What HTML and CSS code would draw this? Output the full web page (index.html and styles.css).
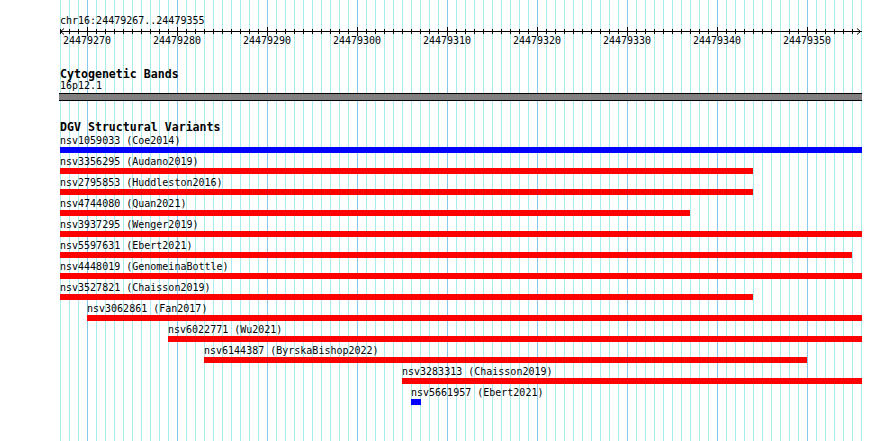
FILE: index.html
```html
<!DOCTYPE html>
<html>
<head>
<meta charset="utf-8">
<link rel="stylesheet" href="styles.css">
</head>
<body>
<div class="panel">
  <div class="locus">chr16:24479267..24479355</div>
  <svg class="ruler" width="802" height="21" viewBox="0 0 802 21">
    <g class="ticks" stroke="#000" stroke-width="1" shape-rendering="crispEdges">
      <line x1="0" y1="4.5" x2="802" y2="4.5"/>
      <path id="minor" d="M0.5 2V7M9.5 2V7M18.5 2V7M36.5 2V7M45.5 2V7M54.5 2V7M63.5 2V7M72.5 2V7M81.5 2V7M99.5 2V7M108.5 2V7"/>
      <use href="#minor" x="90"/><use href="#minor" x="180"/><use href="#minor" x="270"/>
      <use href="#minor" x="360"/><use href="#minor" x="450"/><use href="#minor" x="540"/>
      <use href="#minor" x="630"/>
      <path d="M747.5 2V7M756.5 2V7M765.5 2V7M774.5 2V7M783.5 2V7M792.5 2V7"/>
      <path d="M27.5 0V9M117.5 0V9M207.5 0V9M297.5 0V9M387.5 0V9M477.5 0V9M567.5 0V9M657.5 0V9M747.5 0V9"/>
    </g>
    <g stroke="#000" stroke-width="1" fill="none">
      <path d="M4 1.5L0.5 4.5L4 7.5"/>
      <path d="M797 1.5L800.5 4.5L797 7.5"/>
    </g>
    <g class="labels" text-anchor="middle">
      <text x="27" y="17">24479270</text>
      <text x="117" y="17">24479280</text>
      <text x="207" y="17">24479290</text>
      <text x="297" y="17">24479300</text>
      <text x="387" y="17">24479310</text>
      <text x="477" y="17">24479320</text>
      <text x="567" y="17">24479330</text>
      <text x="657" y="17">24479340</text>
      <text x="747" y="17">24479350</text>
    </g>
  </svg>

  <section class="track cyto">
    <h2 class="track-title">Cytogenetic Bands</h2>
    <div class="label">16p12.1</div>
    <div class="band"></div>
  </section>

  <section class="track dgv">
    <h2 class="track-title">DGV Structural Variants</h2>
    <div class="feature" style="padding-left:0px"><div class="label">nsv1059033 (Coe2014)</div><div class="bar blue" style="width:802px"></div></div>
    <div class="feature" style="padding-left:0px"><div class="label">nsv3356295 (Audano2019)</div><div class="bar red" style="width:693px"></div></div>
    <div class="feature" style="padding-left:0px"><div class="label">nsv2795853 (Huddleston2016)</div><div class="bar red" style="width:693px"></div></div>
    <div class="feature" style="padding-left:0px"><div class="label">nsv4744080 (Quan2021)</div><div class="bar red" style="width:630px"></div></div>
    <div class="feature" style="padding-left:0px"><div class="label">nsv3937295 (Wenger2019)</div><div class="bar red" style="width:802px"></div></div>
    <div class="feature" style="padding-left:0px"><div class="label">nsv5597631 (Ebert2021)</div><div class="bar red" style="width:792px"></div></div>
    <div class="feature" style="padding-left:0px"><div class="label">nsv4448019 (GenomeinaBottle)</div><div class="bar red" style="width:802px"></div></div>
    <div class="feature" style="padding-left:0px"><div class="label">nsv3527821 (Chaisson2019)</div><div class="bar red" style="width:693px"></div></div>
    <div class="feature" style="padding-left:27px"><div class="label">nsv3062861 (Fan2017)</div><div class="bar red" style="width:775px"></div></div>
    <div class="feature" style="padding-left:108px"><div class="label">nsv6022771 (Wu2021)</div><div class="bar red" style="width:694px"></div></div>
    <div class="feature" style="padding-left:144px"><div class="label">nsv6144387 (ByrskaBishop2022)</div><div class="bar red" style="width:603px"></div></div>
    <div class="feature" style="padding-left:342px"><div class="label">nsv3283313 (Chaisson2019)</div><div class="bar red" style="width:460px"></div></div>
    <div class="feature" style="padding-left:351px"><div class="label">nsv5661957 (Ebert2021)</div><div class="bar blue" style="width:10px"></div></div>
  </section>
</div>
</body>
</html>
```

FILE: styles.css
```css
html, body {
  margin: 0;
  padding: 0;
  background: #ffffff;
  overflow: hidden;
}

body {
  font-family: "DejaVu Sans Mono", "Liberation Mono", monospace;
  font-size: 10px;
  color: #000000;
}

.panel {
  box-sizing: border-box;
  margin-left: 60px;
  width: 802px;
  height: 441px;
  padding-top: 15px;
  background-color: #ffffff;
  background-image:
    repeating-linear-gradient(to right, transparent 0 27px, #87c6ee 27px 28px, transparent 28px 90px),
    repeating-linear-gradient(to right, #a8ecf0 0 1px, transparent 1px 9px);
}

.locus {
  line-height: 12px;
  height: 12px;
  white-space: nowrap;
}

.ruler {
  display: block;
  overflow: visible;
}

.ruler .labels text {
  font-family: "DejaVu Sans Mono", "Liberation Mono", monospace;
  font-size: 10px;
  fill: #000000;
}

.track-title {
  margin: 0;
  font-size: 11.6px;
  font-weight: bold;
  line-height: 12px;
  height: 12px;
  white-space: nowrap;
}

.cyto {
  margin-top: 20px;
}

.label {
  line-height: 12px;
  height: 12px;
  white-space: nowrap;
}

.band {
  box-sizing: border-box;
  height: 8px;
  margin-top: 1px;
  margin-left: -1px;
  width: 803px;
  background: #808080;
  border-top: 1px solid #000000;
  border-bottom: 1px solid #000000;
}

.dgv {
  margin-top: 20px;
}

.dgv .track-title {
  margin-bottom: 2px;
}

.feature {
  box-sizing: border-box;
  height: 21px;
}

.bar {
  height: 6px;
}

.bar.red {
  background: #ff0000;
}

.bar.blue {
  background: #0000ff;
}
```
